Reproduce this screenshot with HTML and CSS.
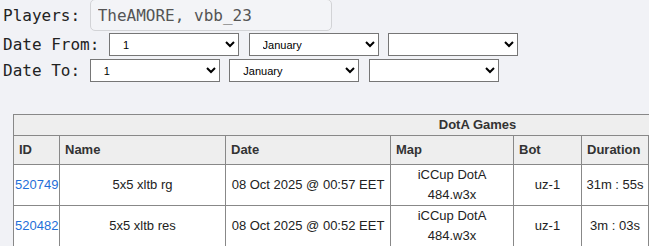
FILE: index.html
```html
<!DOCTYPE html>
<html lang="en">
<head>
    <meta charset="UTF-8">
    <meta name="viewport" content="width=device-width, initial-scale=1.0">
    <title>DotA Games</title>
    <link rel="stylesheet" href="styles.css">
</head>
<body>
    <div class="filters">
        <div class="filter-row players-row">
            <label for="players">Players:</label>
            <input type="text" id="players" value="TheAMORE, vbb_23" readonly>
        </div>
        <div class="filter-row date-row">
            <label>Date From:</label>
            <select><option>1</option></select>
            <select><option>January</option></select>
            <select><option></option></select>
        </div>
        <div class="filter-row date-row">
            <label>Date To:</label>
            <select><option>1</option></select>
            <select><option>January</option></select>
            <select><option></option></select>
        </div>
    </div>

    <div class="games-wrap">
        <table class="games">
            <colgroup>
                <col class="col-id">
                <col class="col-name">
                <col class="col-date">
                <col class="col-map">
                <col class="col-bot">
                <col class="col-duration">
                <col class="col-more">
            </colgroup>
            <thead>
                <tr>
                    <th class="caption" colspan="7">DotA Games</th>
                </tr>
                <tr>
                    <th>ID</th>
                    <th>Name</th>
                    <th>Date</th>
                    <th>Map</th>
                    <th>Bot</th>
                    <th>Duration</th>
                    <th></th>
                </tr>
            </thead>
            <tbody>
                <tr>
                    <td class="id"><a href="#">520749</a></td>
                    <td>5x5 xltb rg</td>
                    <td>08 Oct 2025 @ 00:57 EET</td>
                    <td>iCCup DotA 484.w3x</td>
                    <td>uz-1</td>
                    <td>31m : 55s</td>
                    <td></td>
                </tr>
                <tr>
                    <td class="id"><a href="#">520482</a></td>
                    <td>5x5 xltb res</td>
                    <td>08 Oct 2025 @ 00:52 EET</td>
                    <td>iCCup DotA 484.w3x</td>
                    <td>uz-1</td>
                    <td>3m : 03s</td>
                    <td></td>
                </tr>
            </tbody>
        </table>
    </div>
</body>
</html>
```

FILE: styles.css
```css
body {
    margin: 0;
    background-color: #f1f2f6;
    font-family: "DejaVu Sans Mono", monospace;
    font-size: 16px;
    color: #222;
    overflow: hidden;
}
.filters {
    padding: 0 3px;
}
.filter-row {
    display: flex;
    align-items: center;
    gap: 1ch;
}
.players-row {
    margin-top: -1px;
}
.players-row input {
    width: 242px;
    height: 32px;
    box-sizing: border-box;
    margin: 0;
    padding: 0 7px;
    border: 1px solid #d2d3d6;
    border-radius: 5px;
    background-color: #f3f4f7;
    font-family: "DejaVu Sans Mono", monospace;
    font-size: 16px;
    color: #555;
}
.date-row {
    margin-top: 2px;
}
.date-row + .date-row {
    margin-top: 3px;
}
.date-row select {
    width: 130px;
    height: 23px;
    margin: 0;
    padding: 0 0 0 9px;
    font-family: "Liberation Sans", Arial, sans-serif;
    font-size: 11px;
    color: #000;
    background-color: #fff;
}
.games-wrap {
    margin-top: 32px;
    padding-left: 13px;
    overflow: hidden;
}
.games {
    table-layout: fixed;
    width: 928px;
    border-collapse: collapse;
    font-family: "Liberation Sans", Arial, sans-serif;
    font-size: 13px;
    line-height: 20px;
}
.col-id { width: 46px; }
.col-name { width: 166px; }
.col-date { width: 165px; }
.col-map { width: 123px; }
.col-bot { width: 68px; }
.col-duration { width: 67px; }
.col-more { width: 293px; }
.games th,
.games td {
    border: 1px solid #888;
}
.games th {
    background-color: #eeeeee;
    color: #333;
    text-align: left;
    padding: 4px 5px;
}
.games th.caption {
    text-align: center;
    padding: 0 5px;
}
.games td {
    background-color: #fff;
    color: #222;
    text-align: center;
    padding: 0 4px;
}
.games td.id {
    padding: 0 1px;
}
.games a {
    color: #1f6fd8;
    text-decoration: none;
}
```
